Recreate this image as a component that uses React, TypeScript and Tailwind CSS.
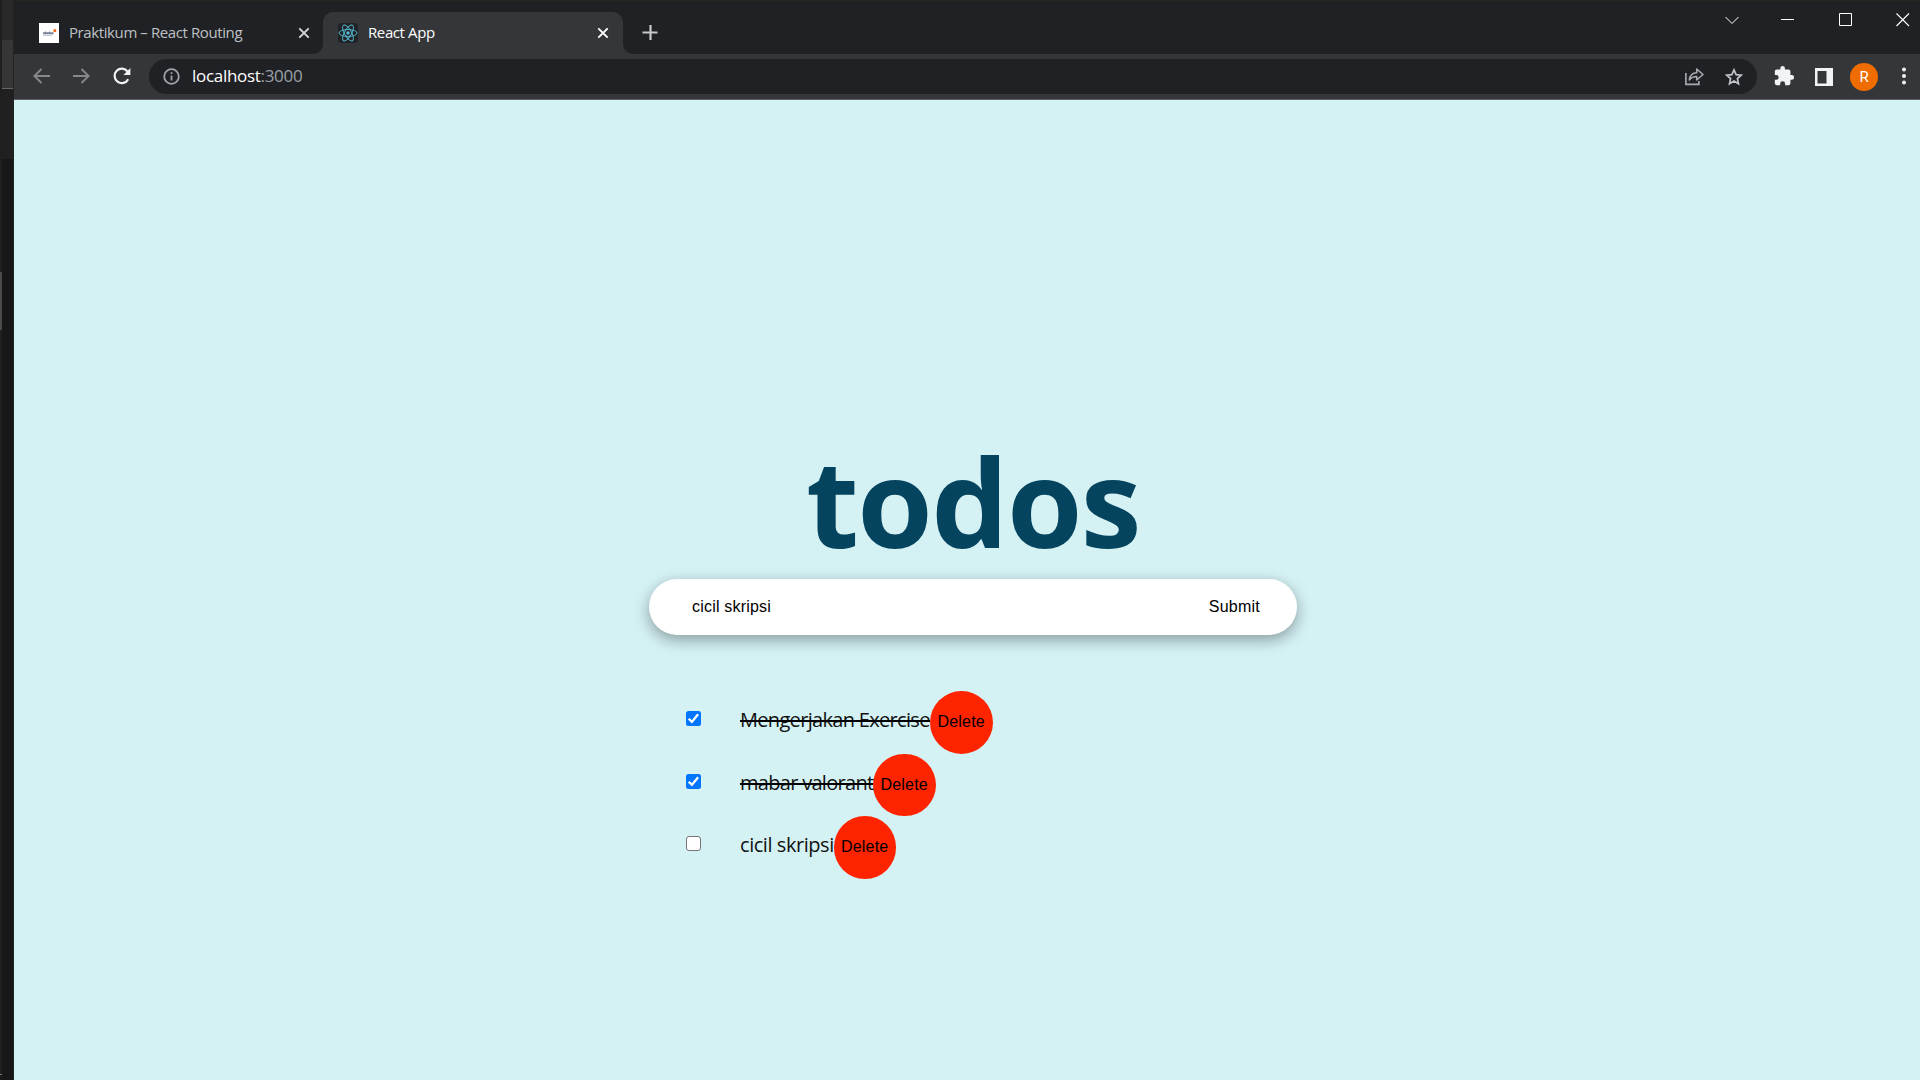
import React from "react";

const ReactLogo = () => (
  <svg className="h-5 w-5 shrink-0 rounded-[3px] bg-[#222326]" viewBox="0 0 20 20" fill="none" stroke="#53bcd6" strokeWidth="0.9">
    <ellipse cx="10" cy="10" rx="9" ry="3.5" />
    <ellipse cx="10" cy="10" rx="9" ry="3.5" transform="rotate(60 10 10)" />
    <ellipse cx="10" cy="10" rx="9" ry="3.5" transform="rotate(120 10 10)" />
    <circle cx="10" cy="10" r="1.7" fill="#53bcd6" stroke="none" />
  </svg>
);

const CampusLogo = () => (
  <svg className="h-5 w-5 shrink-0 bg-white" viewBox="0 0 20 20">
    <path d="M4 9.2h2v-.6h1v.6h3v-.6h1v.6h3.5v2.1H4z" fill="#4d5578" opacity=".75" />
    <path d="M4 12.5h9" stroke="#c9cbd8" strokeWidth="1" />
    <circle cx="15.8" cy="7.6" r="1.6" fill="#f26b1d" />
  </svg>
);

const Cross = ({ color }: { color: string }) => (
  <svg className="h-3 w-3 shrink-0" viewBox="0 0 12 12" stroke={color} strokeWidth="1.9">
    <path d="M1.3 1.3l9.4 9.4M10.7 1.3l-9.4 9.4" />
  </svg>
);

const Backdrop = () => (
  <div className="flex h-full w-[14px] shrink-0 bg-[#1c1b1a]">
    <div className="flex w-[2px] flex-col">
      <div className="h-[272px] bg-[#1f1f1f]" />
      <div className="h-[58px] bg-[#4b4b4b]" />
      <div className="h-[744px] bg-[#1f1f1f]" />
      <div className="h-px bg-[#777777]" />
    </div>
    <div className="flex w-[11px] flex-col">
      <div className="h-10 bg-[#292929]" />
      <div className="h-12 bg-[#363636]" />
      <div className="h-px bg-[#666666]" />
      <div className="h-[70px] bg-[#202020]" />
      <div className="flex-1 bg-[#171717]" />
    </div>
    <div className="w-px bg-[#222222]" />
  </div>
);

const TabStrip = () => (
  <div className="flex h-[54px] shrink-0 border-t border-[#242620] bg-[#202124]">
    <div className="mt-[11px] flex h-[42px] w-[309px] shrink-0 items-center pl-[25px]">
      <CampusLogo />
      <span className="mb-[2px] ml-[10px] w-[226px] whitespace-nowrap text-[15px] tracking-[-0.4px] text-[#bdc1c6]">Praktikum – React Routing</span>
      <span className="ml-[3px]"><Cross color="#d6d8da" /></span>
    </div>
    <div className="relative mt-[11px] flex h-[42px] w-[300px] shrink-0 items-center rounded-t-[10px] bg-[#35363a] pl-[15px]">
      <svg className="absolute -left-[10px] bottom-0 h-[10px] w-[10px]" viewBox="0 0 10 10" fill="#35363a"><path d="M10 0v10H0A10 10 0 0 0 10 0z" /></svg>
      <svg className="absolute -right-[10px] bottom-0 h-[10px] w-[10px]" viewBox="0 0 10 10" fill="#35363a"><path d="M0 0v10h10A10 10 0 0 1 0 0z" /></svg>
      <ReactLogo />
      <span className="mb-[2px] ml-[10px] w-[226px] whitespace-nowrap text-[15px] tracking-[-0.4px] text-white">React App</span>
      <span className="ml-[3px]"><Cross color="#ffffff" /></span>
    </div>
    <svg className="ml-[19px] mt-[23px] h-4 w-4" viewBox="0 0 16 16" stroke="#c7c9cc" strokeWidth="2.2"><path d="M.5 8.500h15M8.500 1v15" /></svg>
    <div className="ml-auto mr-[10px] mt-3 flex h-[14px]">
      <svg className="mr-[42px] h-[14px] w-[14px]" viewBox="0 0 14 14" fill="none" stroke="#fff"><path d="M.5 4l6.500 6.500L13.500 4" /></svg>
      <svg className="mr-[44px] h-[14px] w-[14px]" viewBox="0 0 14 14" stroke="#fff"><path d="M0 6.500h13" /></svg>
      <svg className="mr-[43px] h-[14px] w-[14px]" viewBox="0 0 14 14" fill="none" stroke="#fff"><path d="M.5.5h12v12H.5z" /></svg>
      <svg className="h-[14px] w-[14px]" viewBox="0 0 14 14" stroke="#fff" strokeWidth="1.1"><path d="M.5.5l12.500 12.500M13 .5L.5 13" /></svg>
    </div>
  </div>
);

const Toolbar = () => (
  <div className="flex h-[46px] shrink-0 items-start border-b border-[#606164] bg-[#35363a] pt-[5px]">
    <div className="flex h-[35px] w-[135px] shrink-0 items-center pl-[19px]">
      <svg className="mb-px h-4 w-[17px]" viewBox="0 0 17 16" fill="none" stroke="#86888b" strokeWidth="1.9"><path d="M17 8H1.600M8.500 1L1.400 8l7.100 7" /></svg>
      <svg className="mb-px ml-[23px] h-4 w-[17px]" viewBox="0 0 17 16" fill="none" stroke="#86888b" strokeWidth="1.9"><path d="M0 8h15.400M8.500 1l7.100 7-7.100 7" /></svg>
      <svg className="mb-px ml-[23px] h-[18px] w-[18px]" viewBox="0 0 18 18"><path d="M15.200 12.200A7.200 7.200 0 1 1 14.600 4.600" fill="none" stroke="#f1f3f4" strokeWidth="2.2" /><path d="M17.400 1v7h-7z" fill="#f1f3f4" /></svg>
    </div>
    <div className="flex h-[35px] w-[1608px] shrink-0 items-center rounded-full bg-[#202124] pl-[14px] pr-[14px]">
      <svg className="h-[17px] w-[17px]" viewBox="0 0 17 17" fill="none" stroke="#a0a4a9" strokeWidth="1.8"><circle cx="8.5" cy="8.5" r="7.3" /><path d="M8.500 7.500v5M8.500 4.200v1.900" /></svg>
      <span className="mb-px ml-[12px] whitespace-nowrap text-[17px] tracking-[-0.3px] text-[#9aa0a6]"><span className="text-white">localhost</span>:3000</span>
      <svg className="ml-auto h-[19px] w-[19px]" viewBox="0 0 19 19" fill="none" stroke="#a9adb1" strokeWidth="1.6"><path d="M.9 6v11.400h13V14" /><path d="M4.300 13C4.800 8.800 7.300 6 11.700 5.800V2L18 7.500 11.700 13V9.500C8.200 9.500 6 10.800 4.300 13z" strokeLinejoin="round" strokeWidth="1.5" /></svg>
      <svg className="ml-[21px] h-[18px] w-[18px]" viewBox="0 0 18 18" fill="none" stroke="#c1c4c8" strokeWidth="1.7"><path d="M9 1.900l2.150 4.750 5.100.5-3.850 3.500 1.100 5.100L9 13.100l-4.500 2.650 1.100-5.100L1.750 7.150l5.100-.5z" /></svg>
    </div>
    <div className="flex h-[35px] items-center pl-[16px]">
      <svg className="mb-px h-[22px] w-[22px]" viewBox="0 0 24 24" fill="#f1f3f4"><path d="M20.500 11H19V7c0-1.100-.9-2-2-2h-4V3.500a2.500 2.500 0 0 0-5 0V5H4c-1.100 0-2 .9-2 2v3.800h1.500a2.700 2.700 0 0 1 0 5.400H2V20c0 1.100.9 2 2 2h3.800v-1.500a2.700 2.700 0 0 1 5.400 0V22H17c1.100 0 2-.9 2-2v-4h1.500a2.500 2.500 0 0 0 0-5z" /></svg>
      <svg className="ml-[20px] h-[18px] w-[18px]" viewBox="0 0 18 18" fill="#f1f3f4"><path fillRule="evenodd" d="M0 0h18v18H0zM2.500 3v12.500h9V3z" /></svg>
      <div className="ml-[17px] flex h-7 w-7 items-center justify-center rounded-full bg-[#ef6c00] pt-px font-[Roboto] text-[15px] text-white">R</div>
      <svg className="mb-px ml-[24px] h-[18px] w-1" viewBox="0 0 4 18" fill="#f1f3f4"><circle cx="2" cy="2.500" r="2" /><circle cx="2" cy="9" r="2" /><circle cx="2" cy="15.500" r="2" /></svg>
    </div>
  </div>
);

const CheckBox = ({ done }: { done: boolean }) =>
  done ? (
    <svg className="h-[15px] w-[15px] shrink-0 rounded-[2.5px] bg-[#0075ff]" viewBox="0 0 15 15" fill="none" stroke="#fff" strokeWidth="2.300"><path d="M2.700 7.700l3.200 3.200 6.200-7.700" /></svg>
  ) : (
    <div className="h-[15px] w-[15px] shrink-0 rounded-[3px] border border-[#767676] bg-white" />
  );

const todos = [
  { text: "Mengerjakan Exercise", done: true, size: "w-[190px] tracking-[-0.68px]" },
  { text: "mabar valorant", done: true, size: "w-[133px] tracking-[-0.7px]" },
  { text: "cicil skripsi", done: false, size: "w-[93.5px] tracking-[-0.45px]" },
];

const TodoPage = () => (
  <main className="flex flex-1 flex-col bg-[#d4f1f4] pl-[635px]">
    <h1 className="mt-[319px] h-[160px] whitespace-nowrap pl-[157px] text-[122px] font-bold leading-[165px] tracking-[-1.6px] text-[#05445e]">todos</h1>
    <form className="flex h-14 w-[648px] items-center justify-between rounded-[28px] bg-white pl-[43px] pr-[37px] font-['Liberation_Sans',sans-serif] text-base text-black shadow-[0_5px_15px_rgba(0,0,0,0.35)]">
      <span className="tracking-[0.2px]">cicil skripsi</span>
      <span className="tracking-[0.25px]">Submit</span>
    </form>
    <ul className="mt-14 flex flex-col">
      {todos.map((todo) => (
        <li key={todo.text} className="flex h-[62.5px] items-center pl-[37px]">
          <div className="mb-[7px] flex"><CheckBox done={todo.done} /></div>
          <div className={`relative ml-[39px] whitespace-nowrap text-[20px] leading-7 text-[#111] ${todo.size}`}>
            <span className="relative -top-[2px]">{todo.text}</span>
            {todo.done && <span className="absolute left-0 top-[12px] h-[2px] w-full bg-black" />}
          </div>
          <button className="h-[62.5px] w-[62.5px] shrink-0 rounded-full bg-[#ff2400] font-['Liberation_Sans',sans-serif] text-base tracking-[0.2px] text-black">Delete</button>
        </li>
      ))}
    </ul>
  </main>
);

export default function App() {
  return (
    <div className="flex h-[1080px] w-[1920px] overflow-hidden font-['Open_Sans',sans-serif]">
      <Backdrop />
      <div className="flex w-[1906px] flex-col">
        <TabStrip />
        <Toolbar />
        <TodoPage />
      </div>
    </div>
  );
}
